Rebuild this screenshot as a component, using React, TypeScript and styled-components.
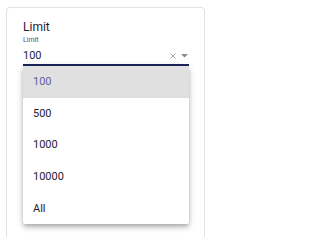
import React, { FC } from 'react';
import styled, { createGlobalStyle } from 'styled-components';

const GlobalStyle = createGlobalStyle`
  html, body {
    margin: 0;
    padding: 0;
    background: #fff;
    overflow: hidden;
  }
  body {
    font-family: Roboto, "Liberation Sans", Arial, sans-serif;
  }
`

const Page = styled.div`
  padding: 7px 9px 0 6px;
  width: 214px;
  height: 237px;
  box-sizing: border-box;
  display: flex;
  flex-direction: column;
`

const Card = styled.div`
  flex: 1;
  border: 1px solid #e2e2e2;
  border-bottom: none;
  border-radius: 4px 4px 0 0;
  box-sizing: border-box;
  padding: 12px 15px 0 16px;
`

const Title = styled.div`
  font-size: 12px;
  line-height: 14px;
  color: #1f2233;
`

const Field = styled.div`
  position: relative;
  margin-top: 2px;
`

const Label = styled.div`
  font-size: 7px;
  line-height: 9px;
  color: #4a5288;
`

const InputRow = styled.div`
  display: flex;
  align-items: center;
  height: 21px;
  padding-top: 5px;
  box-sizing: border-box;
  border-bottom: 2px solid #1c2459;
`

const Value = styled.div`
  flex: 1;
  font-size: 11px;
  line-height: 13px;
  color: #1b1f3a;
  margin-bottom: 3px;
`

const Adornments = styled.div`
  display: flex;
  align-items: center;
  gap: 5px;
  margin-bottom: 3px;
  padding-right: 1px;
`

const Menu = styled.ul`
  position: absolute;
  top: 100%;
  left: 0;
  width: 166px;
  margin: 0;
  padding: 0;
  list-style: none;
  background: #fff;
  border-radius: 2px;
  box-shadow: 0 2px 4px -1px rgba(0, 0, 0, 0.2), 0 4px 5px 0 rgba(0, 0, 0, 0.14),
    0 1px 10px 0 rgba(0, 0, 0, 0.12);
`

const Item = styled.li<{ $selected?: boolean }>`
  display: flex;
  align-items: center;
  height: 31.6px;
  padding-left: 10px;
  font-size: 11px;
  color: ${p => (p.$selected ? '#625f9a' : '#1f2233')};
  background: ${p => (p.$selected ? '#e0e0e0' : 'transparent')};
`

const ClearIcon: FC = () => (
  <svg width="6" height="6" viewBox="0 0 6 6">
    <path d="M0.5 0.5 L5.5 5.5 M5.5 0.5 L0.5 5.5" stroke="#a5a5a5" strokeWidth="1" />
  </svg>
)

const ArrowIcon: FC = () => (
  <svg width="7" height="4" viewBox="0 0 7 4">
    <path d="M0 0 L7 0 L3.5 3.5 Z" fill="#8a8a8a" />
  </svg>
)

const options = ['100', '500', '1000', '10000', 'All']

const App: FC = () => {
  const selected = '100'

  return (
    <>
      <GlobalStyle />
      <Page>
        <Card>
          <Title>Limit</Title>
          <Field>
            <Label>Limit</Label>
            <InputRow>
              <Value>{selected}</Value>
              <Adornments>
                <ClearIcon />
                <ArrowIcon />
              </Adornments>
            </InputRow>
            <Menu>
              {options.map(o => (
                <Item key={o} $selected={o === selected}>{o}</Item>
              ))}
            </Menu>
          </Field>
        </Card>
      </Page>
    </>
  )
}

export default App
